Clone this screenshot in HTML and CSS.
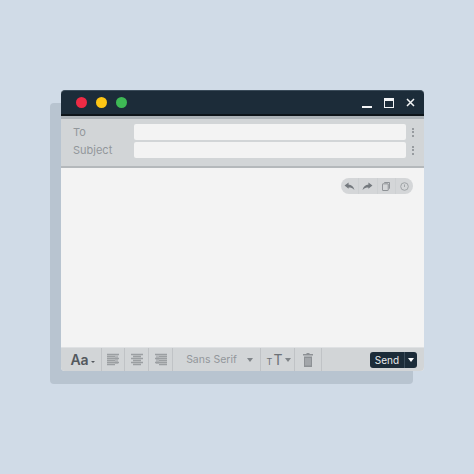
FILE: index.html
```html
<!DOCTYPE html>
<html lang="en">

<head>
    <meta charset="UTF-8">
    <title>Compose</title>
    <link rel="stylesheet" href="styles.css">
</head>

<body>
    <div class="window">
        <div class="titlebar">
            <span class="light red"></span>
            <span class="light yellow"></span>
            <span class="light green"></span>
            <div class="win-controls">
                <span class="win-min"></span>
                <span class="win-max"></span>
                <svg class="win-close" width="9" height="9" viewBox="0 0 9 9">
                    <path d="M1 1L8 8M8 1L1 8" stroke="#f2f4f5" stroke-width="1.5" fill="none" />
                </svg>
            </div>
        </div>

        <div class="header">
            <div class="field-row">
                <span class="field-label">To</span>
                <div class="field-input"></div>
                <div class="kebab"><i></i><i></i><i></i></div>
            </div>
            <div class="field-row">
                <span class="field-label">Subject</span>
                <div class="field-input"></div>
                <div class="kebab"><i></i><i></i><i></i></div>
            </div>
        </div>

        <div class="body">
            <div class="actions">
                <span class="action">
                    <svg width="11" height="9" viewBox="0 0 12 10">
                        <path d="M0.5 4L5 0.5V3C8 3 10.5 4.5 11.5 9C9.5 6.5 7.5 6 5 6V7.5Z" fill="#74797e" />
                    </svg>
                </span>
                <span class="action">
                    <svg width="11" height="9" viewBox="0 0 12 10">
                        <path d="M11.5 4L7 0.5V3C4 3 1.5 4.5 0.5 9C2.5 6.5 4.5 6 7 6V7.5Z" fill="#74797e" />
                    </svg>
                </span>
                <span class="action">
                    <svg width="8" height="9" viewBox="0 0 9 10">
                        <path d="M2.5 0.5H8.5V7.5" stroke="#85898d" fill="none" />
                        <rect x="0.5" y="2" width="6.5" height="7.5" rx="0.5" stroke="#85898d" fill="none" />
                    </svg>
                </span>
                <span class="action">
                    <svg width="9" height="9" viewBox="0 0 9 9">
                        <circle cx="4.5" cy="4.5" r="3.8" stroke="#a0a4a7" fill="none" />
                        <path d="M4.5 2.5V5" stroke="#a0a4a7" />
                    </svg>
                </span>
            </div>
        </div>

        <div class="toolbar">
            <div class="tool tool-font">
                <span class="aa">Aa</span>
                <span class="caret caret-small"></span>
            </div>
            <div class="tool tool-left">
                <svg width="12" height="13" viewBox="0 0 12 13">
                    <path d="M8 2.5H11V11H8Z" fill="#b4b7ba" />
                    <path d="M0 1.5H12M0 3.5H8M0 5.5H12M0 7.5H8M0 9.5H12M0 11.5H8" stroke="#9b9fa2" stroke-width="1.6" />
                </svg>
            </div>
            <div class="tool tool-align">
                <svg width="12" height="13" viewBox="0 0 12 13">
                    <path d="M0 1.5H12M2 3.5H10M0 5.5H12M2 7.5H10M0 9.5H12M2 11.5H10" stroke="#9b9fa2" stroke-width="1.6" />
                </svg>
            </div>
            <div class="tool tool-align">
                <svg width="12" height="13" viewBox="0 0 12 13">
                    <path d="M1 2.5H4V11H1Z" fill="#b4b7ba" />
                    <path d="M0 1.5H12M4 3.5H12M0 5.5H12M4 7.5H12M0 9.5H12M4 11.5H12" stroke="#9b9fa2" stroke-width="1.6" />
                </svg>
            </div>
            <div class="tool tool-family">
                <span>Sans Serif</span>
                <span class="caret"></span>
            </div>
            <div class="tool tool-size">
                <span class="size-small">T</span><span class="size-big">T</span>
                <span class="caret"></span>
            </div>
            <div class="tool tool-trash">
                <svg width="10" height="14" viewBox="0 0 10 14">
                    <path d="M3.5 0H6.5V1H10V2.5H0V1H3.5Z" fill="#8d9195" />
                    <path d="M1 3.5H9V14H1Z" fill="#8d9195" />
                    <path d="M3 5V12.5M5 5V12.5M7 5V12.5" stroke="#c4c7ca" stroke-width="0.8" />
                </svg>
            </div>
            <div class="send">
                <span class="send-label">Send</span>
                <span class="send-menu"><span class="caret caret-white"></span></span>
            </div>
        </div>
    </div>
</body>

</html>
```

FILE: styles.css
```css
* {
    margin: 0;
    padding: 0;
    box-sizing: border-box;
}

body {
    width: 474px;
    height: 474px;
    padding: 90px 0 0 61px;
    background: #d0dbe7;
    font-family: Inter, "Liberation Sans", sans-serif;
    overflow: hidden;
}

.window {
    width: 363px;
    height: 281px;
    display: flex;
    flex-direction: column;
    border-radius: 4px;
    background: #f3f3f3;
    box-shadow: -11px 13px 0 #b8c4d0;
}

/* title bar */
.titlebar {
    height: 26px;
    display: flex;
    align-items: center;
    padding: 0 9px 0 15px;
    gap: 9px;
    background: #1c2c39;
    border-top: 1px solid #3b4c5a;
    border-bottom: 2px solid #0d1419;
    border-radius: 4px 4px 0 0;
}

.light {
    width: 11px;
    height: 11px;
    border-radius: 50%;
}

.red {
    background: #ee2b45;
}

.yellow {
    background: #fdc614;
}

.green {
    background: #3eb955;
}

.win-controls {
    margin-left: auto;
    display: flex;
    align-items: center;
    gap: 12px;
}

.win-min {
    width: 10px;
    height: 2px;
    margin-top: 9px;
    background: #f2f4f5;
}

.win-max {
    width: 10px;
    height: 10px;
    border: 1.5px solid #f2f4f5;
    border-top-width: 3px;
}

/* to / subject */
.header {
    height: 52px;
    padding: 5px 0 0 12px;
    display: flex;
    flex-direction: column;
    gap: 2px;
    background: #d2d5d7;
    border-top: 3px solid #acb2b7;
    border-bottom: 2px solid #b4b8bb;
}

.field-row {
    height: 16px;
    display: flex;
    align-items: center;
}

.field-label {
    width: 61px;
    font-size: 11px;
    line-height: 14px;
    color: #92979b;
}

.field-input {
    width: 272px;
    height: 16px;
    background: #f3f3f3;
    border-radius: 2px;
}

.kebab {
    margin-left: 6px;
    display: flex;
    flex-direction: column;
    gap: 1.5px;
}

.kebab i {
    width: 2px;
    height: 2px;
    background: #979b9f;
}

/* message area */
.body {
    flex: 1;
    position: relative;
}

.actions {
    position: absolute;
    top: 10px;
    right: 11px;
    width: 72px;
    height: 16px;
    display: flex;
    background: #d4d6d8;
    border-radius: 8px;
}

.action {
    flex: 1;
    display: flex;
    align-items: center;
    justify-content: center;
    border-right: 1px solid #cdd0d2;
}

.action:last-child {
    border-right: none;
}

/* bottom toolbar */
.toolbar {
    height: 24px;
    display: flex;
    align-items: center;
    background: #d2d5d7;
    border-radius: 0 0 4px 4px;
    border-top: 1px solid #dfe1e3;
}

.tool {
    height: 100%;
    display: flex;
    align-items: center;
    justify-content: center;
    border-right: 1px solid #c0c3c6;
}

.tool-font {
    width: 41px;
    gap: 2px;
    padding-left: 3px;
}

.aa {
    font-size: 14px;
    font-weight: 600;
    color: #54595e;
}

.tool-left {
    width: 23px;
}

.tool-align {
    width: 24px;
}

.tool-family {
    width: 88px;
    gap: 10px;
    padding-left: 6px;
    font-size: 10.5px;
    color: #92979b;
}

.tool-size {
    width: 34px;
    gap: 1px;
    padding-left: 3px;
    color: #6c7176;
}

.size-small {
    font-size: 9px;
    margin-top: 3px;
}

.size-big {
    font-size: 14px;
    margin-right: 2px;
}

.tool-trash {
    width: 27px;
}

.caret {
    width: 0;
    height: 0;
    border-left: 3.5px solid transparent;
    border-right: 3.5px solid transparent;
    border-top: 4px solid #7f8488;
}

.caret-small {
    border-left-width: 2px;
    border-right-width: 2px;
    border-top: 2px solid #54595e;
    margin-top: 4px;
}

.caret-white {
    border-top-color: #fff;
}

.send {
    margin-left: auto;
    margin-right: 7px;
    width: 47px;
    height: 16px;
    display: flex;
    align-items: center;
    background: #1c2c39;
    border-radius: 3px;
    color: #e8eaec;
    font-size: 10px;
}

.send-label {
    width: 34px;
    text-align: center;
}

.send-menu {
    flex: 1;
    height: 100%;
    display: flex;
    align-items: center;
    justify-content: center;
    border-left: 1px solid #3b4c5a;
}
```
